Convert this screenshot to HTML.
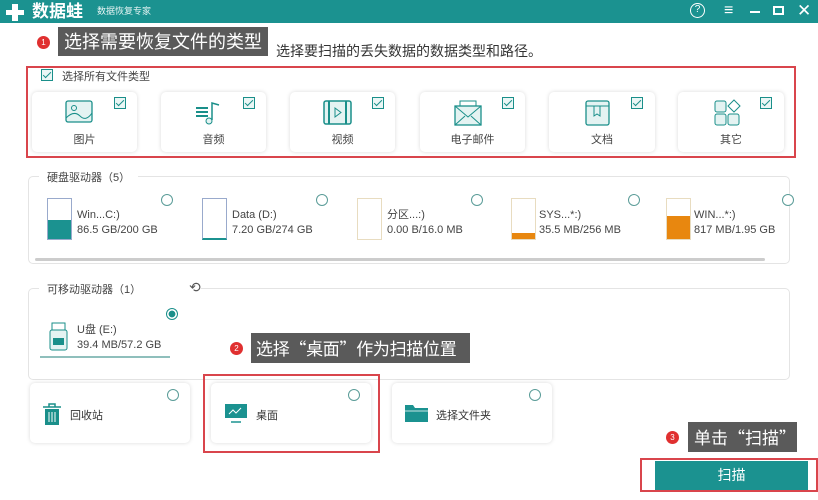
<!DOCTYPE html>
<html><head><meta charset="utf-8"><style>
*{margin:0;padding:0;box-sizing:border-box}
body{width:818px;height:500px;background:#fff;position:relative;overflow:hidden;font-family:"Liberation Sans","Noto Sans CJK SC",sans-serif;color:#333}
.a{position:absolute}
.card{position:absolute;background:#fff;border-radius:5px;box-shadow:0 0 4px rgba(0,0,0,.15)}
.cb{position:absolute;width:12px;height:12px;border:1px solid #1a8f8a;background:#eaf6f5}
.cb::after{content:"";position:absolute;left:3px;top:0px;width:3px;height:7px;border:solid #1a8f8a;border-width:0 1.5px 1.5px 0;transform:rotate(45deg)}
.lbl{position:absolute;width:100%;text-align:center;font-size:11px;top:39px;color:#444}
.rad{position:absolute;width:12px;height:12px;border:1px solid #5a9c98;border-radius:50%;background:#fff}
.dtx{position:absolute;font-size:11px;line-height:15px;color:#444}
.call{position:absolute;background:#5a5a5a;color:#fff;font-size:18px;line-height:30px;padding:0 6px;font-family:"Noto Sans CJK SC",sans-serif}
.dot{position:absolute;width:13px;height:13px;border-radius:50%;background:#e03030;color:#fff;font-size:8px;text-align:center;line-height:13px}
.red{position:absolute;border:2px solid #d9454c}
.grp{position:absolute;border:1px solid #e4e4e4;border-radius:5px}
.gt{position:absolute;background:#fff;font-size:11px;padding:0 8px;color:#444}
</style></head><body>
<div class="a" style="left:0;top:0;width:818px;height:23px;background:#1b9290"></div>
<svg class="a" style="left:4px;top:2px" width="26" height="20"><path d="M8 2h6v6h6v5h-6v6h-6v-6H2V8h6z" fill="#fff"/></svg>
<div class="a" style="left:32px;top:1px;color:#fff;font-size:17px;font-weight:bold;line-height:21px">数据蛙</div>
<div class="a" style="left:97px;top:5px;color:#e6f4f3;font-size:9px;line-height:12px">数据恢复专家</div>
<div class="a" style="left:690px;top:3px;width:15px;height:15px;border:1.5px solid #fff;border-radius:50%;color:#fff;font-size:10px;text-align:center;line-height:12px">?</div>
<div class="a" style="left:724px;top:0;color:#fff;font-size:16px;line-height:21px">≡</div>
<div class="a" style="left:750px;top:11px;width:10px;height:2px;background:#fff"></div>
<div class="a" style="left:773px;top:6px;width:11px;height:9px;border:2px solid #fff"></div>
<div class="a" style="left:797px;top:0;color:#fff;font-size:17px;line-height:22px">✕</div>

<div class="dot" style="left:37px;top:36px">1</div>
<div class="call" style="left:58px;top:27px;height:29px;line-height:29px">选择需要恢复文件的类型</div>
<div class="a" style="left:276px;top:41px;font-size:14px;color:#333">选择要扫描的丢失数据的数据类型和路径。</div>

<div class="red" style="left:26px;top:66px;width:770px;height:92px"></div>
<div class="cb" style="left:41px;top:69px"></div>
<div class="a" style="left:62px;top:68px;font-size:11px;color:#444">选择所有文件类型</div>

<div class="card" style="left:32px;top:92px;width:105px;height:60px">
<svg class="a" style="left:33px;top:8px" width="30" height="24"><rect x="1" y="1" width="26" height="21" rx="2" fill="#e4f3f2" stroke="#1a8f8a" stroke-width="1.3"/><circle cx="9" cy="8" r="2.5" fill="none" stroke="#1a8f8a"/><path d="M1 18q8-8 14-2t12-3" fill="none" stroke="#1a8f8a"/></svg>
<div class="cb" style="left:82px;top:5px"></div><div class="lbl">图片</div></div>
<div class="card" style="left:161px;top:92px;width:105px;height:60px">
<svg class="a" style="left:33px;top:8px" width="30" height="26"><path d="M2 8h12M2 12h12M2 16h12" stroke="#1a8f8a" stroke-width="2"/><path d="M18 20V3l7 2" fill="none" stroke="#1a8f8a" stroke-width="1.5"/><circle cx="15" cy="21" r="3" fill="#e4f3f2" stroke="#1a8f8a"/></svg>
<div class="cb" style="left:82px;top:5px"></div><div class="lbl">音频</div></div>
<div class="card" style="left:290px;top:92px;width:105px;height:60px">
<svg class="a" style="left:33px;top:8px" width="30" height="26"><rect x="1" y="1" width="27" height="23" rx="2" fill="#e4f3f2" stroke="#1a8f8a" stroke-width="1.5"/><path d="M6 1v23M23 1v23" stroke="#1a8f8a" stroke-width="2"/><path d="M12 8l6 4.5-6 4.5z" fill="none" stroke="#1a8f8a"/></svg>
<div class="cb" style="left:82px;top:5px"></div><div class="lbl">视频</div></div>
<div class="card" style="left:420px;top:92px;width:105px;height:60px">
<svg class="a" style="left:33px;top:7px" width="30" height="28"><rect x="7" y="2" width="16" height="6" fill="#fff" stroke="#1a8f8a"/><rect x="2" y="7" width="26" height="19" fill="#e4f3f2" stroke="#1a8f8a" stroke-width="1.3"/><path d="M2 7l13 11 13-11M2 26l10-9M28 26l-10-9" fill="none" stroke="#1a8f8a"/></svg>
<div class="cb" style="left:82px;top:5px"></div><div class="lbl">电子邮件</div></div>
<div class="card" style="left:549px;top:92px;width:106px;height:60px">
<svg class="a" style="left:35px;top:7px" width="28" height="28"><rect x="2" y="2" width="23" height="24" rx="2" fill="#e4f3f2" stroke="#1a8f8a" stroke-width="1.3"/><path d="M2 7h23M10 7v10l3-2 3 2V7" fill="none" stroke="#1a8f8a"/></svg>
<div class="cb" style="left:82px;top:5px"></div><div class="lbl">文档</div></div>
<div class="card" style="left:678px;top:92px;width:106px;height:60px">
<svg class="a" style="left:35px;top:7px" width="30" height="28"><rect x="2" y="2" width="11" height="11" rx="2" fill="#e4f3f2" stroke="#1a8f8a"/><path d="M21 1l6 6-6 6-6-6z" fill="#fff" stroke="#1a8f8a"/><rect x="2" y="15" width="11" height="11" rx="2" fill="#e4f3f2" stroke="#1a8f8a"/><rect x="15" y="15" width="11" height="11" rx="2" fill="#e4f3f2" stroke="#1a8f8a"/></svg>
<div class="cb" style="left:82px;top:5px"></div><div class="lbl">其它</div></div>

<div class="grp" style="left:28px;top:176px;width:762px;height:88px"></div>
<div class="gt" style="left:39px;top:169px">硬盘驱动器（5）</div>
<div class="a" style="left:47px;top:198px;width:25px;height:42px;border:1px solid #9ac;background:linear-gradient(#fff 52%,#1b9290 52%)"></div>
<div class="dtx" style="left:77px;top:208px">Win...C:)<br>86.5 GB/200 GB</div>
<div class="a" style="left:202px;top:198px;width:25px;height:42px;border:1px solid #9ac;border-bottom:2px solid #1b9290"></div>
<div class="dtx" style="left:232px;top:208px">Data (D:)<br>7.20 GB/274 GB</div>
<div class="a" style="left:357px;top:198px;width:25px;height:42px;border:1px solid #e8dcc0"></div>
<div class="dtx" style="left:387px;top:208px">分区...:)<br>0.00 B/16.0 MB</div>
<div class="a" style="left:511px;top:198px;width:25px;height:42px;border:1px solid #e8dcc0;background:linear-gradient(#fff 85%,#e8870f 85%)"></div>
<div class="dtx" style="left:539px;top:208px">SYS...*:)<br>35.5 MB/256 MB</div>
<div class="a" style="left:666px;top:198px;width:25px;height:42px;border:1px solid #e8dcc0;background:linear-gradient(#fff 42%,#e8870f 42%)"></div>
<div class="dtx" style="left:694px;top:208px">WIN...*:)<br>817 MB/1.95 GB</div>
<div class="rad" style="left:161px;top:194px"></div><div class="rad" style="left:316px;top:194px"></div><div class="rad" style="left:471px;top:194px"></div><div class="rad" style="left:628px;top:194px"></div><div class="rad" style="left:782px;top:194px"></div>
<div class="a" style="left:35px;top:258px;width:730px;height:3px;background:#ccc;border-radius:2px"></div>

<div class="grp" style="left:28px;top:288px;width:762px;height:92px"></div>
<div class="gt" style="left:39px;top:281px;padding-right:60px">可移动驱动器（1）</div>
<div class="a" style="left:189px;top:279px;font-size:14px;color:#555">⟲</div>
<div class="rad" style="left:166px;top:308px;border-color:#1a8f8a;background:radial-gradient(#1a8f8a 45%,#fff 50%)"></div>
<svg class="a" style="left:49px;top:322px" width="20" height="30"><rect x="3" y="1" width="13" height="8" fill="#fff" stroke="#1a8f8a"/><rect x="1" y="8" width="17" height="20" rx="2" fill="#e4f3f2" stroke="#1a8f8a"/><rect x="4" y="16" width="11" height="7" fill="#1a8f8a"/></svg>
<div class="dtx" style="left:77px;top:323px">U盘 (E:)<br>39.4 MB/57.2 GB</div>
<div class="a" style="left:40px;top:356px;width:130px;height:2px;background:#8fbfbc"></div>

<div class="dot" style="left:230px;top:342px">2</div>
<div class="call" style="left:251px;top:333px;height:30px;width:219px;white-space:nowrap;font-size:17px;padding:0 5px;letter-spacing:-0.3px">选择“桌面”作为扫描位置</div>

<div class="card" style="left:30px;top:383px;width:160px;height:60px">
<svg class="a" style="left:12px;top:20px" width="20" height="24"><path d="M1 4h18M7 4V1h6v3" fill="none" stroke="#1a8f8a" stroke-width="1.5"/><rect x="3" y="6" width="14" height="16" fill="#1a8f8a"/><path d="M7 9v10M10 9v10M13 9v10" stroke="#fff"/></svg>
<div class="a" style="left:40px;top:24px;font-size:11px">回收站</div><div class="rad" style="left:137px;top:6px"></div></div>
<div class="card" style="left:211px;top:383px;width:160px;height:60px">
<svg class="a" style="left:13px;top:20px" width="24" height="22"><rect x="1" y="1" width="22" height="14" fill="#1b9290"/><path d="M5 11l4-4 3 3 5-5" fill="none" stroke="#fff"/><path d="M7 19h10" stroke="#1b9290" stroke-width="1.5"/></svg>
<div class="a" style="left:45px;top:24px;font-size:11px">桌面</div><div class="rad" style="left:137px;top:6px"></div></div>
<div class="red" style="left:203px;top:374px;width:177px;height:79px"></div>
<div class="card" style="left:392px;top:383px;width:160px;height:60px">
<svg class="a" style="left:12px;top:20px" width="26" height="20"><path d="M1 2h8l2 3h13v14H1z" fill="#1b9290"/><path d="M1 8h23" stroke="#fff" stroke-width=".8"/></svg>
<div class="a" style="left:44px;top:24px;font-size:11px">选择文件夹</div><div class="rad" style="left:137px;top:6px"></div></div>

<div class="dot" style="left:666px;top:431px">3</div>
<div class="call" style="left:688px;top:422px;height:30px;width:109px;font-size:17px;white-space:nowrap">单击“扫描”</div>
<div class="red" style="left:640px;top:458px;width:178px;height:34px"></div>
<div class="a" style="left:655px;top:461px;width:153px;height:29px;background:#1b9290;color:#fff;font-size:14px;text-align:center;line-height:29px">扫描</div>
</body></html>
